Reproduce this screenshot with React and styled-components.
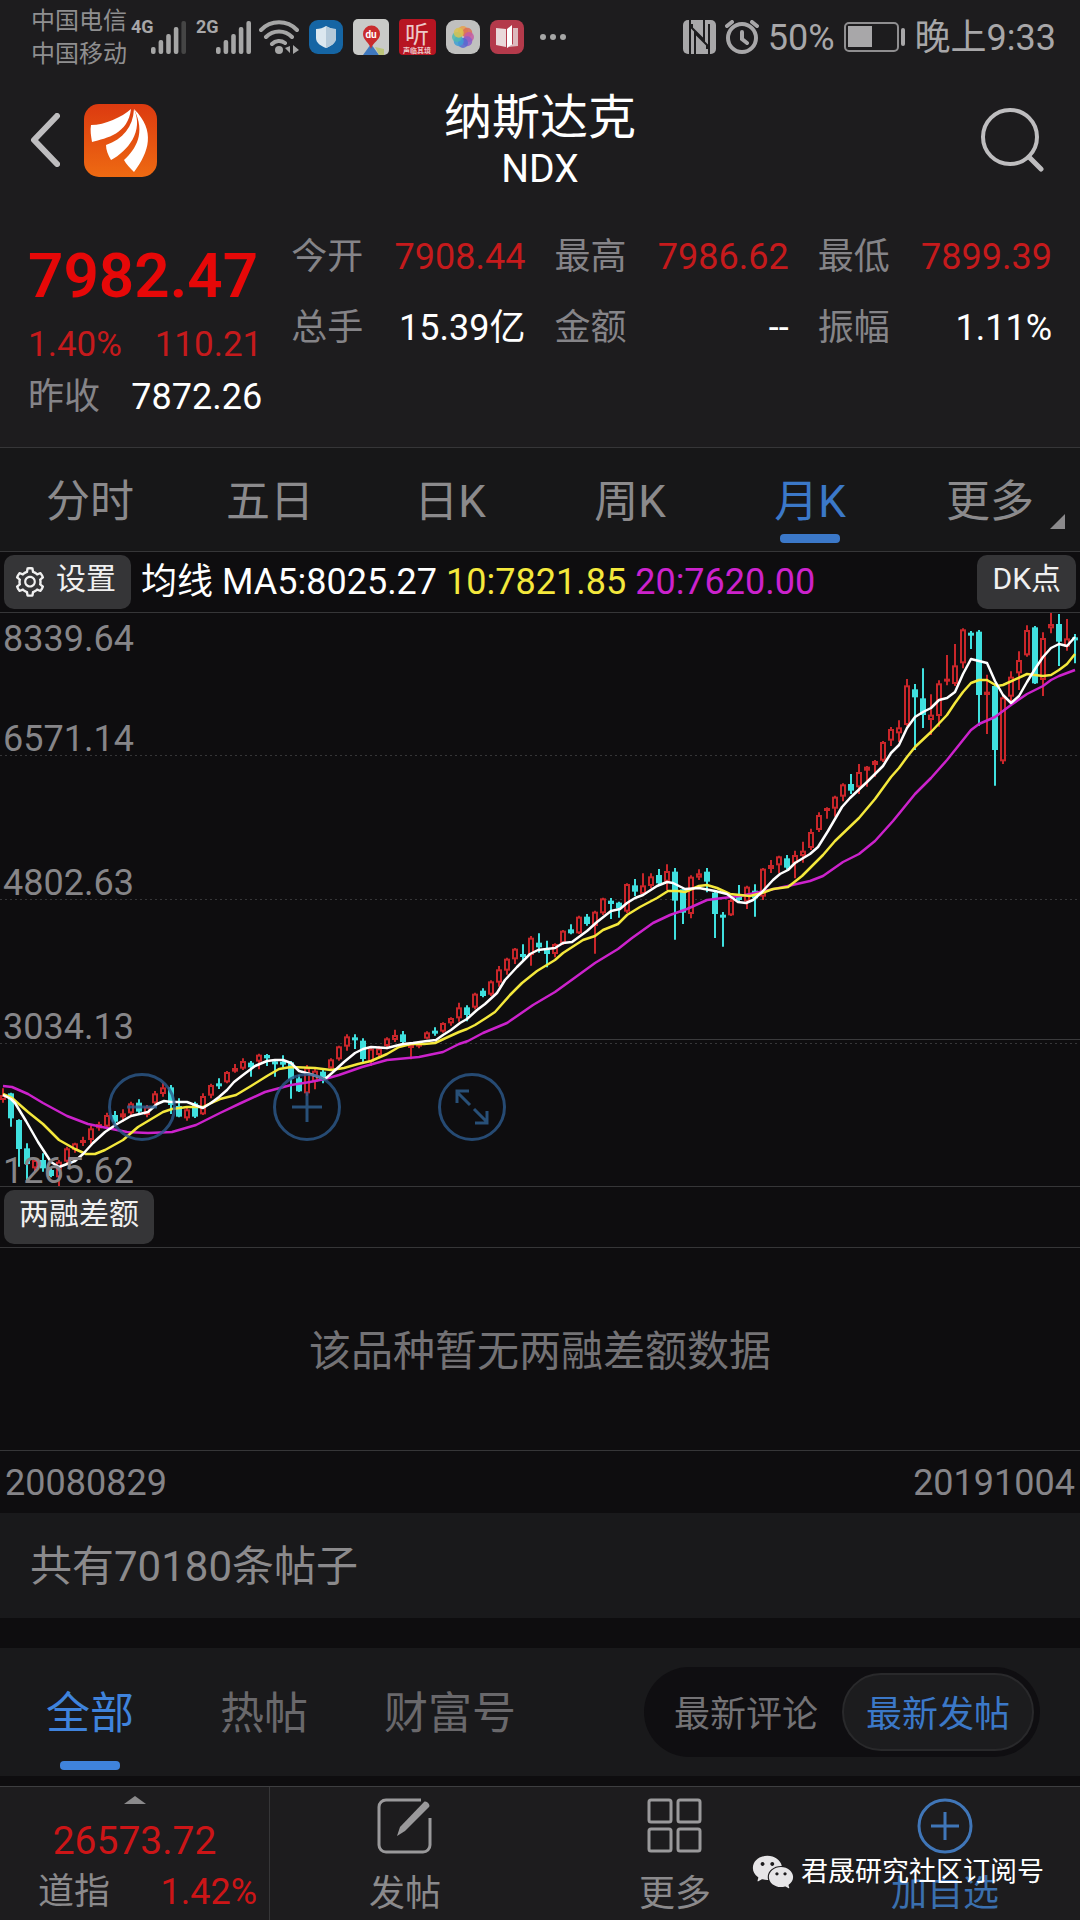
import React from "react";
import styled, { createGlobalStyle } from "styled-components";
import { AiFillWechat, AiOutlineSetting } from "react-icons/ai";

const stats = [
  { label: "今开", value: "7908.44", up: true },
  { label: "最高", value: "7986.62", up: true },
  { label: "最低", value: "7899.39", up: true },
  { label: "总手", value: "15.39亿" },
  { label: "金额", value: "--" },
  { label: "振幅", value: "1.11%" },
];

const periods = ["分时", "五日", "日K", "周K", "月K", "更多"];
const feeds = ["全部", "热帖", "财富号"];

const gridLabels = [
  { text: "8339.64", y: 39 },
  { text: "6571.14", y: 139 },
  { text: "4802.63", y: 283 },
  { text: "3034.13", y: 427 },
  { text: "1265.62", y: 571 },
];

// monthly candles: [up, high, body top, body bottom, low]
// values are thirds of a chart unit, counted from the base of the block
const candleBlocks = [
  {
    base: 1104,
    rows: [
      [1, 325, 345, 360, 368], [0, 338, 340, 415, 440], [0, 418, 420, 507, 560], [0, 490, 505, 552, 605],
      [1, 535, 540, 565, 575], [0, 520, 540, 565, 575], [0, 565, 570, 588, 592], [1, 540, 545, 592, 618],
      [1, 500, 505, 545, 550], [1, 488, 490, 510, 518], [1, 470, 480, 488, 498], [1, 438, 445, 480, 492],
      [1, 425, 432, 445, 452], [1, 398, 405, 440, 445], [0, 393, 405, 425, 432], [1, 388, 400, 412, 425],
      [1, 365, 370, 400, 408], [0, 358, 368, 395, 402], [1, 375, 380, 405, 412], [1, 333, 340, 370, 378],
      [1, 308, 322, 342, 350], [0, 315, 322, 375, 402], [0, 355, 378, 410, 412], [1, 383, 388, 415, 422],
      [0, 365, 370, 410, 414], [1, 340, 348, 403, 405], [1, 311, 315, 347, 355], [0, 295, 310, 315, 327],
      [1, 273, 276, 307, 310], [1, 252, 264, 275, 278], [1, 235, 243, 266, 270], [0, 243, 248, 262, 290],
      [1, 221, 224, 245, 268], [0, 222, 225, 235, 258], [0, 240, 244, 250, 290], [0, 226, 245, 252, 262],
      [0, 243, 247, 297, 356], [0, 285, 295, 334, 336], [1, 255, 263, 340, 347], [1, 264, 272, 305, 328],
      [0, 265, 275, 292, 310], [1, 235, 238, 265, 270], [1, 197, 199, 238, 242], [1, 163, 169, 200, 212],
      [0, 163, 172, 180, 207], [0, 175, 182, 237, 247], [1, 202, 206, 245, 258], [1, 198, 205, 225, 235],
      [1, 172, 175, 198, 208], [1, 149, 165, 180, 186], [0, 153, 163, 186, 192], [1, 190, 195, 202, 238],
      [1, 186, 188, 200, 205], [1, 154, 157, 176, 178], [0, 142, 152, 158, 167], [1, 127, 129, 155, 158],
      [1, 112, 114, 130, 137], [1, 68, 82, 115, 125], [0, 76, 82, 105, 124], [1, 38, 41, 83, 88],
    ],
  },
  {
    base: 564,
    rows: [
      [0, 565, 572, 588, 592], [1, 541, 544, 584, 588], [1, 498, 508, 548, 560], [1, 473, 476, 512, 524],
      [1, 444, 446, 478, 492], [0, 433, 462, 470, 480], [1, 408, 413, 465, 497], [0, 400, 428, 442, 458],
      [0, 422, 450, 462, 502], [1, 430, 432, 462, 472], [1, 390, 392, 430, 435], [0, 373, 388, 400, 403],
      [1, 347, 350, 400, 402], [0, 342, 350, 372, 377], [1, 332, 335, 378, 461], [1, 293, 295, 340, 345],
      [0, 294, 302, 312, 357], [0, 305, 308, 325, 353], [1, 250, 252, 335, 340], [0, 237, 256, 275, 288],
      [1, 220, 256, 282, 285], [1, 220, 229, 258, 265], [0, 207, 225, 250, 253], [1, 193, 213, 245, 270],
      [0, 204, 215, 302, 419], [0, 265, 268, 338, 372], [1, 226, 230, 342, 355], [1, 208, 220, 233, 240],
      [0, 204, 215, 245, 277], [0, 272, 278, 342, 414], [0, 336, 344, 353, 440], [1, 295, 300, 346, 348],
      [0, 255, 282, 300, 306], [1, 257, 260, 305, 327], [0, 253, 272, 295, 350], [1, 204, 206, 290, 300],
      [1, 180, 195, 207, 219], [1, 167, 169, 196, 220], [0, 165, 175, 203, 209], [1, 152, 165, 190, 235],
      [1, 125, 152, 168, 188],
    ],
  },
  {
    base: -36,
    rows: [
      [1, 686, 696, 744, 750], [1, 637, 645, 690, 696], [1, 622, 624, 632, 656], [1, 587, 590, 626, 650],
      [1, 550, 553, 590, 604], [0, 522, 552, 572, 582], [1, 492, 516, 562, 582], [1, 498, 500, 512, 560],
      [1, 480, 483, 495, 530], [1, 423, 426, 482, 486], [1, 381, 387, 422, 438], [1, 361, 382, 400, 426],
      [1, 237, 256, 375, 378], [0, 252, 268, 292, 450], [0, 205, 295, 345, 384], [1, 283, 344, 360, 405],
      [1, 241, 250, 348, 380], [1, 165, 236, 245, 256], [1, 132, 196, 252, 258], [1, 85, 88, 190, 205],
      [0, 93, 98, 104, 147], [0, 90, 95, 285, 377], [1, 224, 275, 285, 402], [0, 250, 258, 450, 557],
      [1, 288, 292, 484, 492], [1, 214, 230, 290, 305], [1, 154, 180, 220, 270], [1, 76, 90, 166, 170],
      [0, 78, 82, 250, 252], [1, 97, 114, 240, 288], [1, 36, 72, 85, 100], [0, 42, 72, 125, 198],
      [1, 57, 115, 140, 152], [0, 102, 112, 118, 190],
    ],
  },
];

const candles = candleBlocks
  .flatMap(({ base, rows }) =>
    rows.map(([up, ...values]) => [up, ...values.map((v) => (v + base) / 3)])
  )
  .map(([up, high, top, bottom, low], i) => ({
    x: 3 + i * 8,
    up,
    high,
    top,
    bottom,
    low,
  }));

const ma5 =
  "3,483 11,487 15,491 26,509 38,530 51,550 59,555 67,552 75,549 83,542 93,531 105,520 117,512 131,504 148,500 157,492 164,489 171,490 187,490 195,493 203,496 211,491 219,485 227,478 234,470 243,463 255,454 267,449 275,448 283,448 291,451 299,459 310,462 325,467 332,461 344,450 355,441 363,437 371,435 387,436 403,432 413,431 427,429 436,428 443,423 451,418 460,411 467,407 477,398 485,392 497,381 505,368 517,355 530,342 538,338 555,336 563,331 572,330 587,319 597,310 611,299 620,297 627,291 635,286 643,283 657,274 667,270 673,271 685,277 699,276 715,279 727,282 738,290 746,291 753,288 762,280 773,268 780,262 788,258 795,251 810,242 818,235 828,219 842,195 850,186 867,170 875,162 883,154 891,141 899,133 907,116 915,105 923,100 931,96 939,88 947,86 955,80 963,62 971,47 979,49 987,51 995,69 1003,83 1011,91 1019,84 1027,70 1035,57 1043,45 1051,36 1059,32 1067,34 1075,25";
const ma10 =
  "3,482 12,486 28,500 43,512 59,528 75,537 86,542 95,542 105,538 123,528 138,515 163,500 172,497 187,495 203,495 211,491 220,487 236,483 251,474 267,464 279,457 291,455 315,456 331,458 344,456 358,452 371,449 387,442 399,435 411,432 424,432 435,431 448,425 459,420 467,417 475,413 486,406 495,400 510,383 522,371 537,359 555,348 563,341 583,328 595,324 603,318 618,312 627,303 640,295 657,286 668,279 678,279 685,280 699,274 707,273 717,276 730,282 750,284 762,281 773,277 788,275 802,264 810,256 823,243 835,229 859,206 875,187 891,165 899,156 907,145 915,135 931,120 947,103 955,91 963,80 971,71 979,68 987,68 997,74 1003,73 1027,62 1043,64 1051,63 1059,58 1067,52 1075,42";
const ma20 =
  "3,474 12,475 28,482 43,491 67,504 88,512 107,516 127,520 148,521 172,520 196,513 220,501 241,491 265,480 291,473 310,470 325,467 339,463 362,455 387,448 419,445 443,440 459,432 468,429 483,421 507,411 533,393 555,380 573,367 595,351 618,337 632,326 653,311 670,303 687,297 707,288 723,286 740,284 760,280 788,274 810,269 823,264 843,250 859,242 875,229 893,209 915,182 931,166 947,148 963,128 971,118 979,112 995,105 1011,93 1027,82 1043,74 1051,68 1059,64 1075,58";

function Signal({ weak }) {
  return (
    <svg width="36" height="34" viewBox="0 0 36 34">
      {[7, 14, 20, 27, 33].map((h, i) => (
        <rect
          key={h}
          x={i * 7.6}
          y={34 - h}
          width="4.6"
          height={h}
          rx="2"
          fill={weak && i === 4 ? "#454545" : "#a6a6a6"}
        />
      ))}
    </svg>
  );
}

function Wifi() {
  return (
    <svg width="40" height="34" viewBox="0 0 40 34" fill="none" stroke="#a6a6a6" strokeWidth="4" strokeLinecap="round">
      <path d="M2 10a25 25 0 0 1 36 0M7 17a18 18 0 0 1 26 0M13 24a10 10 0 0 1 13-1" />
      <circle cx="20" cy="30" r="4" fill="#a6a6a6" stroke="none" />
      <path d="M31 26v7l-5-5zM34 34v-9l6 5z" fill="#a6a6a6" stroke="none" />
    </svg>
  );
}

function ShieldApp() {
  return (
    <svg width="34" height="34" viewBox="0 0 34 34">
      <rect width="34" height="34" rx="9" fill="#1565a4" />
      <path d="M17 6c3 2 6 3 10 3v9c0 5-5 8-10 10C12 26 7 23 7 18V9c4 0 7-1 10-3z" fill="#dbe7ef" />
      <path d="M17 6c3 2 6 3 10 3v9c0 5-5 8-10 10z" fill="#b4c9d9" />
    </svg>
  );
}

function MapApp() {
  return (
    <svg width="36" height="36" viewBox="0 0 36 36">
      <rect width="36" height="36" rx="5" fill="#c9cac8" />
      <path d="M10 36l8-11 8 11z" fill="#3e78be" />
      <path d="M22 28l9 2v6h-5z" fill="#bcc57b" />
      <path d="M18 30c-2-7-8-9-8-15a8 8 0 0 1 17 0c0 6-7 8-9 15z" fill="#c92b2d" />
      <text x="18" y="19" fill="#fff" fontSize="10" fontWeight="700" textAnchor="middle">
        du
      </text>
    </svg>
  );
}

function ListenApp() {
  return (
    <svg width="37" height="36" viewBox="0 0 37 36" fill="#ecc9c9" textAnchor="middle">
      <rect width="37" height="36" rx="4" fill="#b71522" />
      <text x="18" y="24" fontSize="24">
        听
      </text>
      <text x="18" y="34" fontSize="7" fontWeight="700">
        声临其境
      </text>
    </svg>
  );
}

function GalleryApp() {
  const petals = ["#e8a04b", "#dd6f55", "#c45ba5", "#8b5ec9", "#5668d0", "#3e9fd4", "#4fb9b0", "#d8c251"];
  return (
    <svg width="34" height="34" viewBox="0 0 34 34">
      <rect width="34" height="34" rx="9" fill="#c0c0bf" />
      {petals.map((fill, i) => (
        <circle key={fill} cx="17" cy="11" r="5" fill={fill} opacity="0.85" transform={`rotate(${i * 45} 17 17)`} />
      ))}
    </svg>
  );
}

function BookApp() {
  return (
    <svg width="34" height="34" viewBox="0 0 34 34">
      <rect width="34" height="34" rx="8" fill="#b43a4b" />
      <path d="M6 8l10 1v18L6 25z" fill="#ead9da" />
      <path d="M17 9l5-4v20l-5 3z" fill="#fff" />
      <path d="M23 8h5v18l-10 1 5-3z" fill="#dcb9bd" />
    </svg>
  );
}

function Nfc() {
  return (
    <svg width="33" height="34" viewBox="0 0 33 34">
      <rect width="33" height="34" rx="5" fill="#a8a7a9" />
      <path
        d="M7 0v34M12 34V13l12 12v4M26 34V4M21 0v20L9 8V4"
        fill="none"
        stroke="#1d1c1e"
        strokeWidth="2"
      />
    </svg>
  );
}

function Alarm() {
  return (
    <svg width="34" height="34" viewBox="0 0 34 34" fill="none" stroke="#a8a7a9" strokeWidth="4" strokeLinecap="round">
      <circle cx="17" cy="18" r="14" />
      <path d="M17 12v7l5 4M2 6l5-4M32 6l-5-4" />
    </svg>
  );
}

function Battery() {
  return (
    <svg width="62" height="30" viewBox="0 0 62 30">
      <rect x="1" y="1" width="53" height="28" rx="4" fill="none" stroke="#8f8e90" strokeWidth="2" />
      <rect x="4" y="4" width="24" height="21" fill="#a8a7a9" />
      <rect x="57" y="6" width="4" height="18" rx="2" fill="#a8a7a9" />
    </svg>
  );
}

function Logo() {
  return (
    <svg width="73" height="73" viewBox="0 0 73 73">
      <defs>
        <linearGradient id="logo" x1="0" y1="0" x2="0" y2="1">
          <stop offset="0" stopColor="#dc3a10" />
          <stop offset="1" stopColor="#ee6a12" />
        </linearGradient>
      </defs>
      <rect width="73" height="73" rx="15" fill="url(#logo)" />
      <g fill="#fff">
        <path d="M47 5C38 13 21 21 7 21c-1 5 0 11 1 17 15-4 36-8 39-33z" />
        <path d="M50 5c-1 18-11 30-28 36 0 5 2 10 5 15C44 47 60 27 50 5z" />
        <path d="M50 5c12 24 2 40-10 51 2 4 6 8 10 12C65 48 72 27 50 5z" />
      </g>
    </svg>
  );
}

function Chart() {
  return (
    <ChartSvg viewBox="0 1 1080 573" role="img" aria-label="月K">
      <g stroke="#363638" strokeDasharray="2 3">
        <path d="M0 143.500H1080M0 287.500H1080M0 431.500H1080" />
      </g>
      <path d="M480 427.500H1080" stroke="#3a3a3c" />
      {candles.map(({ x, up, high, top, bottom, low }) => (
        <g key={x} stroke={up ? "#c9262a" : "#3fe0df"} strokeWidth="2">
          <path d={`M${x} ${high}V${low}`} />
          <rect
            x={x - 2}
            y={top + 1}
            width="4"
            height={Math.max(bottom - top - 2, 1)}
            fill={up ? "#0e0d0f" : "#3fe0df"}
          />
        </g>
      ))}
      <g fill="none" strokeWidth="2.5" strokeLinejoin="round">
        <polyline points={ma20} stroke="#cc22cc" />
        <polyline points={ma10} stroke="#f4e83c" />
        <polyline points={ma5} stroke="#fff" />
      </g>
      <g fill="#868588" fontSize="36">
        {gridLabels.map(({ text, y }) => (
          <text key={text} x="3" y={y}>
            {text}
          </text>
        ))}
      </g>
    </ChartSvg>
  );
}

export default function App() {
  return (
    <Page>
      <GlobalStyle />
      <StatusBar>
        <Carriers>
          <span>中国电信</span>
          <span>中国移动</span>
        </Carriers>
        <Network>4G</Network>
        <Signal weak />
        <SecondNetwork>2G</SecondNetwork>
        <Signal />
        <Apps>
          <Wifi />
          <ShieldApp />
          <MapApp />
          <ListenApp />
          <GalleryApp />
          <BookApp />
          <svg width="32" height="6" viewBox="0 0 32 6" fill="#a6a6a6">
            <circle cx="9" cy="3" r="3" />
            <circle cx="19" cy="3" r="3" />
            <circle cx="29" cy="3" r="3" />
          </svg>
        </Apps>
        <Device>
          <Nfc />
          <Alarm />
          <span>50%</span>
          <Battery />
          <span>晚上9:33</span>
        </Device>
      </StatusBar>

      <Header>
        <HeaderSide>
          <IconButton aria-label="返回">
            <svg width="30" height="54" viewBox="0 0 30 54" fill="none" stroke="#bebdbf" strokeWidth="6" strokeLinecap="round" strokeLinejoin="round">
              <path d="M27 3L4 27l23 24" />
            </svg>
          </IconButton>
          <Logo />
        </HeaderSide>
        <Titles>
          <Title>纳斯达克</Title>
          <Code>NDX</Code>
        </Titles>
        <HeaderSide $end>
          <IconButton aria-label="搜索">
            <svg width="64" height="66" viewBox="0 0 64 66" fill="none" stroke="#bebdbf" strokeWidth="4" strokeLinecap="round">
              <circle cx="30" cy="30" r="27" />
              <path d="M49 50l12 12" strokeWidth="5" />
            </svg>
          </IconButton>
        </HeaderSide>
      </Header>

      <Quote>
        <Summary>
          <Price>7982.47</Price>
          <Change>
            <span>1.40%</span>
            <span>110.21</span>
          </Change>
          <Previous>
            <Label as="span">昨收</Label>
            <Value as="span">7872.26</Value>
          </Previous>
        </Summary>
        <Stats>
          {stats.map((stat) => (
            <Stat key={stat.label}>
              <Label>{stat.label}</Label>
              <Value $up={stat.up}>{stat.value}</Value>
            </Stat>
          ))}
        </Stats>
      </Quote>

      <Periods>
        {periods.map((name) => (
          <Period key={name} $active={name === "月K"}>
            {name}
            {name === "更多" && <Corner />}
          </Period>
        ))}
      </Periods>

      <Toolbar>
        <Chip>
          <AiOutlineSetting size={34} />
          <span>设置</span>
        </Chip>
        <Averages>
          <span>均线</span>
          <Average $color="#fff">MA5:8025.27</Average>
          <Average $color="#f4e83c">10:7821.85</Average>
          <Average $color="#cc22cc">20:7620.00</Average>
        </Averages>
        <Chip>
          <span>DK点</span>
        </Chip>
      </Toolbar>

      <ChartArea>
        <Chart />
        <ZoomControls>
          <Round aria-label="缩小">
            <svg width="32" height="32" viewBox="0 0 32 32">
              <path d="M1 16h30" />
            </svg>
          </Round>
          <Round aria-label="放大">
            <svg width="32" height="32" viewBox="0 0 32 32">
              <path d="M1 16h30M16 1v30" />
            </svg>
          </Round>
          <Round aria-label="全屏">
            <svg width="36" height="36" viewBox="0 0 36 36">
              <path d="M16 16L3 3M3 14V2h12M20 20l13 13M33 22v12H21" />
            </svg>
          </Round>
        </ZoomControls>
      </ChartArea>

      <Toolbar>
        <Chip>
          <span>两融差额</span>
        </Chip>
      </Toolbar>
      <Empty>该品种暂无两融差额数据</Empty>
      <Dates>
        <span>20080829</span>
        <span>20191004</span>
      </Dates>

      <Posts>共有70180条帖子</Posts>

      <FeedBar>
        <Feeds>
          {feeds.map((name) => (
            <Feed key={name} $active={name === "全部"}>
              {name}
            </Feed>
          ))}
        </Feeds>
        <Switch>
          <Option>最新评论</Option>
          <Option $active>最新发帖</Option>
        </Switch>
      </FeedBar>

      <BottomBar>
        <Index>
          <svg width="22" height="8" viewBox="0 0 22 8">
            <path d="M0 8L11 0l11 8z" fill="#8b8a8c" />
          </svg>
          <IndexPrice>26573.72</IndexPrice>
          <IndexRow>
            <IndexName>道指</IndexName>
            <span>1.42%</span>
          </IndexRow>
        </Index>
        <Action>
          <svg width="56" height="56" viewBox="0 0 56 56">
            <path d="M44 2H9a7 7 0 0 0-7 7v38a7 7 0 0 0 7 7h37a7 7 0 0 0 7-7V20" />
            <path d="M20 38l3-9L47 4c2-2 7 3 5 5L28 33z" fill="#9a999b" stroke="none" />
          </svg>
          发帖
        </Action>
        <Action>
          <svg width="56" height="56" viewBox="0 0 56 56">
            <rect x="2" y="2" width="22" height="22" rx="2" />
            <rect x="31" y="2" width="22" height="22" rx="2" />
            <rect x="2" y="31" width="22" height="22" rx="2" />
            <rect x="31" y="31" width="22" height="22" rx="2" />
          </svg>
          更多
        </Action>
        <Action $blue>
          <svg width="56" height="56" viewBox="0 0 56 56">
            <circle cx="28" cy="28" r="26" />
            <path d="M14 28h28M28 14v28" />
          </svg>
          加自选
        </Action>
        <Account>
          <AiFillWechat size={46} />
          君晟研究社区订阅号
        </Account>
      </BottomBar>
    </Page>
  );
}

const GlobalStyle = createGlobalStyle`
  * {
    box-sizing: border-box;
  }
  body {
    margin: 0;
    background: #0e0d0f;
  }
  body, button {
    font-family: Roboto, "Noto Sans CJK SC", sans-serif;
  }
  button {
    padding: 0;
    border: none;
    background: none;
    color: inherit;
    cursor: pointer;
  }
  svg {
    display: block;
    flex-shrink: 0;
  }
`;
const Page = styled.div`
  background: #0e0d0f;
  color: #fff;
  overflow: hidden;
`;
const StatusBar = styled.div`
  display: flex;
  align-items: center;
  height: 74px;
  padding: 0 24px 0 31px;
  background: #1d1c1e;
  color: #a8a7a9;
`;
const Carriers = styled.div`
  display: flex;
  flex-direction: column;
  flex-shrink: 0;
  padding-top: 2px;
  font-size: 24px;
  line-height: 33px;
  color: #8f8f90;
`;
const Network = styled.span`
  align-self: flex-start;
  width: 20px;
  margin: 17px 0 0 4px;
  font-size: 18px;
  font-weight: 700;
  line-height: 20px;
`;
const SecondNetwork = styled(Network)`
  margin-left: 9px;
`;
const Apps = styled.div`
  display: flex;
  align-items: center;
  gap: 10px;
  margin-left: 7px;
`;
const Device = styled.div`
  display: flex;
  align-items: center;
  gap: 9px;
  margin-left: auto;
  font-size: 36px;
  line-height: 40px;
  white-space: nowrap;
  span {
    padding-top: 2px;
  }
`;
const Header = styled.header`
  display: grid;
  grid-template-columns: 1fr auto 1fr;
  align-items: center;
  height: 132px;
  padding: 0 30px;
  background: #1d1c1e;
`;
const HeaderSide = styled.div`
  display: flex;
  align-items: center;
  gap: 24px;
  justify-content: ${({ $end }) => ($end ? "flex-end" : "flex-start")};
  padding-right: ${({ $end }) => ($end ? "6px" : "0")};
`;
const IconButton = styled.button`
  display: flex;
`;
const Titles = styled.div`
  padding-top: 5px;
  text-align: center;
`;
const Title = styled.h1`
  margin: 0;
  font-size: 48px;
  font-weight: 400;
  line-height: 52px;
`;
const Code = styled.div`
  font-size: 39px;
  line-height: 50px;
`;
const Quote = styled.section`
  display: grid;
  grid-template-columns: repeat(4, 1fr);
  column-gap: 29px;
  padding: 24px 28px 21px;
  background: #1d1c1e;
  border-bottom: 1px solid #363638;
  font-size: 36px;
`;
const Summary = styled.div`
  min-width: 0;
`;
const Price = styled.div`
  font-size: 62px;
  font-weight: 600;
  line-height: 92px;
  color: #e60808;
`;
const Change = styled.div`
  display: flex;
  justify-content: space-between;
  font-size: 35px;
  line-height: 46px;
  color: #c51a1c;
`;
const Previous = styled.div`
  display: flex;
  justify-content: space-between;
  line-height: 58px;
`;
const Stats = styled.dl`
  grid-column: 2 / 5;
  display: grid;
  grid-template-columns: repeat(3, 1fr);
  align-content: start;
  gap: 19px 29px;
  margin: 0;
  padding-top: 1px;
`;
const Stat = styled.div`
  display: flex;
  justify-content: space-between;
  line-height: 52px;
`;
const Label = styled.dt`
  color: #858488;
`;
const Value = styled.dd`
  margin: 0;
  color: ${({ $up }) => ($up ? "#c51a1c" : "#fff")};
`;
const Periods = styled.nav`
  display: grid;
  grid-template-columns: repeat(6, 1fr);
  height: 104px;
  background: #171718;
  border-bottom: 1px solid #363638;
`;
const Period = styled.button`
  position: relative;
  padding-top: 4px;
  font-size: 44px;
  line-height: 56px;
  color: ${({ $active }) => ($active ? "#3b78c8" : "#8b8a8c")};
  &::after {
    content: "";
    display: ${({ $active }) => ($active ? "block" : "none")};
    position: absolute;
    left: calc(50% - 30px);
    bottom: 8px;
    width: 60px;
    height: 9px;
    border-radius: 4px;
    background: #3b78c8;
  }
`;
const Corner = styled.span`
  position: absolute;
  right: 15px;
  bottom: 22px;
  border-left: 15px solid transparent;
  border-bottom: 15px solid #8b8a8c;
`;
const Toolbar = styled.div`
  display: flex;
  align-items: center;
  height: 61px;
  padding: 0 4px;
  border-bottom: 1px solid #363638;
`;
const Chip = styled.button`
  display: flex;
  align-items: center;
  gap: 9px;
  height: 54px;
  padding: 0 15px;
  border-radius: 10px;
  background: #353537;
  color: #f0f0f0;
  font-size: 30px;
  line-height: 40px;
  white-space: nowrap;
  svg {
    margin-left: -6px;
  }
  span {
    padding-bottom: 6px;
  }
`;
const Averages = styled.div`
  display: flex;
  flex: 1;
  align-items: baseline;
  gap: 9px;
  padding-left: 10px;
  font-size: 36px;
  line-height: 50px;
  white-space: nowrap;
`;
const Average = styled.span`
  color: ${({ $color }) => $color};
`;
const ChartArea = styled.div`
  position: relative;
  border-bottom: 1px solid #363638;
`;
const ChartSvg = styled.svg`
  width: 100%;
  height: auto;
`;
const ZoomControls = styled.div`
  position: absolute;
  left: 10%;
  bottom: 45px;
  display: flex;
  gap: 97px;
`;
const Round = styled.button`
  display: flex;
  align-items: center;
  justify-content: center;
  width: 68px;
  height: 68px;
  border: 3px solid #2c5a8c;
  border-radius: 50%;
  opacity: 0.8;
  svg {
    fill: none;
    stroke: #2f6193;
    stroke-width: 3;
  }
`;
const Empty = styled.div`
  display: flex;
  align-items: center;
  justify-content: center;
  height: 203px;
  padding-bottom: 4px;
  border-bottom: 1px solid #363638;
  font-size: 42px;
  color: #737275;
`;
const Dates = styled.div`
  display: flex;
  justify-content: space-between;
  padding: 2px 5px 0;
  font-size: 36px;
  line-height: 60px;
  color: #858488;
`;
const Posts = styled.div`
  padding: 2px 30px 0;
  margin-bottom: 30px;
  background: #19191b;
  font-size: 42px;
  line-height: 103px;
  color: #8b8a8c;
`;
const FeedBar = styled.div`
  display: flex;
  align-items: center;
  justify-content: space-between;
  height: 128px;
  margin-bottom: 10px;
  padding-right: 40px;
  background: #19191b;
`;
const Feeds = styled.nav`
  display: grid;
  grid-template-columns: 180px 168px 204px;
  align-self: stretch;
`;
const Feed = styled(Period)`
  color: ${({ $active }) => ($active ? "#3f83dc" : "#69686b")};
  &::after {
    bottom: 6px;
    background: #3f83dc;
  }
`;
const Switch = styled.div`
  display: flex;
  padding: 6px;
  border-radius: 46px;
  background: #0f0e11;
`;
const Option = styled.button`
  height: 78px;
  padding: 0 22px 2px;
  border-radius: 39px;
  font-size: 36px;
  white-space: nowrap;
  color: ${({ $active }) => ($active ? "#3b78c8" : "#737275")};
  background: ${({ $active }) => ($active ? "#1c1c1e" : "none")};
  border: 2px solid ${({ $active }) => ($active ? "#29292b" : "transparent")};
`;
const BottomBar = styled.footer`
  position: relative;
  display: grid;
  grid-template-columns: 1fr 1fr 1fr 1fr;
  height: 135px;
  background: #1d1c1e;
  border-top: 1px solid #3e3e40;
`;
const Index = styled.div`
  display: flex;
  flex-direction: column;
  align-items: center;
  padding: 9px 10px 0;
  border-right: 1px solid #363638;
  color: #cc1517;
`;
const IndexPrice = styled.div`
  padding-top: 11px;
  font-size: 39px;
  line-height: 52px;
`;
const IndexRow = styled.div`
  display: flex;
  align-self: stretch;
  justify-content: space-between;
  padding: 0 2px 0 28px;
  font-size: 36px;
  line-height: 50px;
`;
const IndexName = styled.span`
  color: #8b8a8c;
`;
const Action = styled.button`
  display: flex;
  flex-direction: column;
  align-items: center;
  padding-top: 11px;
  gap: 15px;
  font-size: 36px;
  line-height: 50px;
  color: ${({ $blue }) => ($blue ? "#3a6fae" : "#8b8a8c")};
  svg {
    fill: none;
    stroke: ${({ $blue }) => ($blue ? "#4076b8" : "#9a999b")};
    stroke-width: 3;
  }
`;
const Account = styled.div`
  position: absolute;
  right: 36px;
  bottom: 26px;
  display: flex;
  align-items: center;
  gap: 5px;
  font-size: 27px;
  line-height: 46px;
  color: #fff;
  svg {
    color: #e6e5e7;
  }
`;
